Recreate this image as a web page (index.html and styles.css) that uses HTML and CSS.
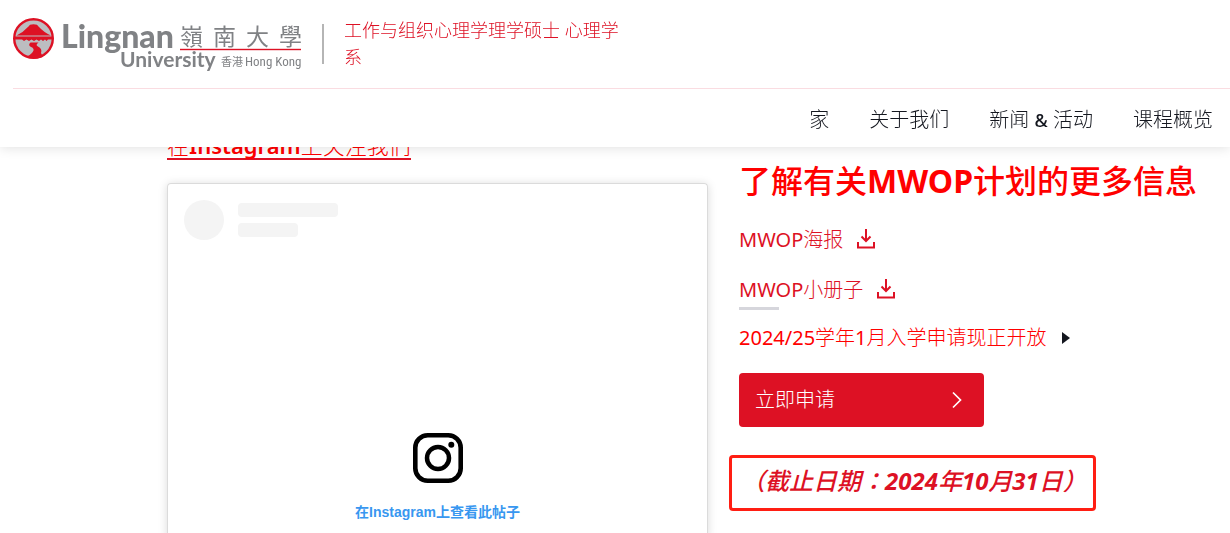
FILE: index.html
```html
<!DOCTYPE html>
<html lang="zh-CN">
<head>
    <meta charset="UTF-8">
    <meta name="viewport" content="width=device-width, initial-scale=1.0">
    <title>工作与组织心理学理学硕士 心理学系</title>
    <link rel="stylesheet" href="styles.css">
</head>
<body>
    <header class="site-header">
        <div class="brand-bar">
            <a class="logo" href="#" aria-label="Lingnan University">
                <svg width="290" height="60" viewBox="0 0 290 60">
                    <!-- 校徽 -->
                    <circle cx="20.500" cy="24.500" r="19.300" fill="#bcbdc0" stroke="#dd1124" stroke-width="2.400"/>
                    <path d="M3.500 21.500 Q10 18.500 15.500 12.500 L17 10.800 Q20.500 9.500 24 10.800 L25.500 12.500 Q31 18.500 38 21.500Z" fill="#dd1124"/>
                    <path d="M1 22.500 H40 V25.500 H35 L33.500 27 L32 25.500 L30 27 L28 25.500 L26 27 L23.500 25.500 L21 27 L18.500 25.500 L16 27 L13.500 25.500 L11 27 L9 25.500 H1Z" fill="#dd1124"/>
                    <path d="M17.500 28.500 H25.500 Q22 31 25 32.500 Q29.500 34.500 28 39 L30 43 Q21 46 14 42.500 Q19 40 20.500 36.500 Q21 34 18 33 Q14.500 31 17.500 28.500Z" fill="#dd1124"/>
                    <text class="logo-name" x="48" y="34">Lingnan</text>
                    <text class="logo-univ" x="107" y="53">University</text>
                    <text class="logo-zh" x="167 200 233 266" y="31">嶺南大學</text>
                    <rect x="167" y="34.800" width="121" height="1.400" fill="#dd1124"/>
                    <text class="logo-hk" x="208" y="52">香港</text>
                    <text class="logo-city" x="232" y="52">Hong Kong</text>
                </svg>
            </a>
            <a class="programme" href="#">工作与组织心理学理学硕士 心理学系</a>
        </div>
        <nav class="main-nav">
            <a href="#">家</a>
            <a href="#">关于我们</a>
            <a href="#">新闻 <b>&amp;</b> 活动</a>
            <a href="#">课程概览</a>
        </nav>
    </header>

    <main class="content">
        <section class="social">
            <h3><a href="#">在<b>Instagram</b>上关注我们</a></h3>
            <div class="insta-card">
                <div class="insta-head">
                    <span class="avatar"></span>
                    <div class="lines">
                        <span class="line"></span>
                        <span class="line short"></span>
                    </div>
                </div>
                <a class="insta-link" href="#">
                    <svg width="50" height="50" viewBox="0 0 50 50" fill="none" stroke="#000">
                        <rect x="2.300" y="2.300" width="45.400" height="45.400" rx="12.500" stroke-width="4.600"/>
                        <circle cx="25" cy="25" r="11" stroke-width="4.500"/>
                        <circle cx="38.300" cy="11.700" r="3" fill="#000" stroke="none"/>
                    </svg>
                    <span>在Instagram上查看此帖子</span>
                </a>
            </div>
        </section>

        <section class="info">
            <h2>了解有关<b>MWOP</b>计划的更多信息</h2>
            <a class="download" href="#"><span><b>MWOP</b>海报</span>
                <svg width="20" height="22" viewBox="0 0 20 22" fill="none" stroke="#dd1124" stroke-width="2"><path d="M10 0V12M5.500 7.500L10 12L14.500 7.500M2 13V18.500H18V13"/></svg>
            </a>
            <a class="download" href="#"><span><b>MWOP</b>小册子</span>
                <svg width="20" height="22" viewBox="0 0 20 22" fill="none" stroke="#dd1124" stroke-width="2"><path d="M10 0V12M5.500 7.500L10 12L14.500 7.500M2 13V18.500H18V13"/></svg>
            </a>
            <a class="notice" href="#"><span><b>2024/25</b>学年<b>1</b>月入学申请现正开放</span>
                <svg width="8" height="12" viewBox="0 0 8 12"><path d="M0 0L8 6L0 12Z" fill="#14171f"/></svg>
            </a>
            <button class="apply-btn" type="button">立即申请
                <svg width="10" height="18" viewBox="0 0 10 18" fill="none" stroke="#fff" stroke-width="1.700"><path d="M1 1.500L8.500 9L1 16.500"/></svg>
            </button>
            <p class="deadline" lang="zh-TW">（截止日期：<b>2024</b>年<b>10</b>月<b>31</b>日）</p>
        </section>
    </main>
</body>
</html>
```

FILE: styles.css
```css
* {
    box-sizing: border-box;
    margin: 0;
    padding: 0;
}

body {
    background: #fff;
    color: #14171f;
    font-family: "Noto Sans", "Noto Sans CJK SC", sans-serif;
    font-size: 20px;
    font-weight: 300;
    line-height: 28px;
}

a {
    color: #dd1124;
    text-decoration: none;
}

/* 西文比中文略粗 */
b {
    font-weight: 400;
}

svg {
    display: block;
    flex: none;
}

/* 顶部导航 */
.site-header {
    position: fixed;
    top: 0;
    left: 0;
    right: 0;
    z-index: 10;
    background: #fff;
    box-shadow: 0 0 12px rgba(0, 0, 0, 0.14);
}

.brand-bar {
    display: flex;
    align-items: center;
    height: 89px;
    margin-left: 13px;
    border-bottom: 1px solid #fadce1;
}

.logo {
    margin-right: 19px;
}

.logo text {
    fill: #808285;
}

.logo-name {
    font: 900 32px Lato, sans-serif;
}

.logo-univ {
    font: 700 21px Lato, sans-serif;
}

.logo .logo-zh {
    font: 400 23px "Noto Sans CJK TC", sans-serif;
}

.logo .logo-hk {
    font: 400 11px "Noto Sans CJK TC", sans-serif;
}

.logo-city {
    font: 400 13px "Liberation Sans Narrow", "Roboto Condensed", sans-serif;
}

.programme {
    position: relative;
    width: 300px;
    padding-left: 22px;
    font-size: 18px;
    line-height: 27px;
}

.programme::before {
    content: "";
    position: absolute;
    left: 0;
    top: 7px;
    width: 2px;
    height: 40px;
    background: #b5b5b5;
}

.main-nav {
    display: flex;
    justify-content: flex-end;
    align-items: center;
    gap: 40px;
    height: 58px;
    padding: 3px 17px 0 0;
}

.main-nav a {
    color: #14171f;
}

.main-nav b {
    font-size: 18px;
    font-weight: 500;
}

/* 正文 */
.content {
    display: grid;
    grid-template-columns: minmax(0, 541px) minmax(0, 1fr);
    gap: 31px;
    height: 100vh;
    padding: 132px 20px 0 167px;
    overflow: hidden;
}

.social {
    display: flex;
    flex-direction: column;
}

.social h3 {
    margin-bottom: 23px;
    font-size: 22px;
    font-weight: 300;
    line-height: 28px;
}

.social h3 a {
    display: block;
    width: fit-content;
    color: #f00;
    border-bottom: 2px solid #dd1124;
    line-height: 26px;
}

.social h3 b {
    font-weight: 600;
}

.insta-card {
    flex: 1;
    padding: 16px;
    border: 1px solid #dbdbdb;
    border-bottom: 0;
    border-radius: 4px 4px 0 0;
    box-shadow: 0 1px 10px rgba(0, 0, 0, 0.15);
}

.insta-head {
    display: flex;
    align-items: center;
    gap: 14px;
    margin-bottom: 193px;
}

.avatar {
    width: 40px;
    height: 40px;
    border-radius: 50%;
    background: #f4f4f4;
}

.lines {
    display: grid;
    gap: 6px;
}

.line {
    width: 100px;
    height: 14px;
    border-radius: 4px;
    background: #f4f4f4;
}

.line.short {
    width: 60px;
}

.insta-link {
    display: flex;
    flex-direction: column;
    align-items: center;
    gap: 20px;
    color: #3897f0;
    font: 700 14px/18px "Liberation Sans", "Noto Sans CJK SC", sans-serif;
}

.info {
    display: flex;
    flex-direction: column;
    align-items: flex-start;
    padding-top: 28px;
}

.info h2 {
    margin-bottom: 24px;
    color: #f00;
    font-size: 32px;
    font-weight: 500;
    line-height: 42px;
}

.info h2 b {
    font-weight: 700;
}

.download,
.notice {
    display: flex;
    align-items: center;
    gap: 13px;
}

.download {
    margin-bottom: 22px;
}

/* 第二个链接下的短横线 */
.download + .download {
    position: relative;
    margin-bottom: 20px;
}

.download + .download::after {
    content: "";
    position: absolute;
    left: 0;
    bottom: -6px;
    width: 40px;
    height: 3px;
    background: #d6d6dc;
}

.notice {
    gap: 15px;
    margin-bottom: 21px;
    color: #f00;
}

.apply-btn {
    display: flex;
    justify-content: space-between;
    align-items: center;
    width: 245px;
    height: 54px;
    padding: 0 22px 0 16px;
    border: 0;
    border-radius: 4px;
    background: #dd1124;
    color: #fff;
    font: inherit;
    cursor: pointer;
}

.deadline {
    margin: 28px 0 0 -10px;
    padding: 7px 6px 12px 9px;
    border: 3px solid #ff1e13;
    border-radius: 4px;
    color: #dd1124;
    font-family: "Noto Sans", "Noto Sans CJK TC", sans-serif;
    font-size: 24px;
    font-style: italic;
    font-weight: 500;
    line-height: 31px;
}

.deadline b {
    font-weight: 700;
}
```
